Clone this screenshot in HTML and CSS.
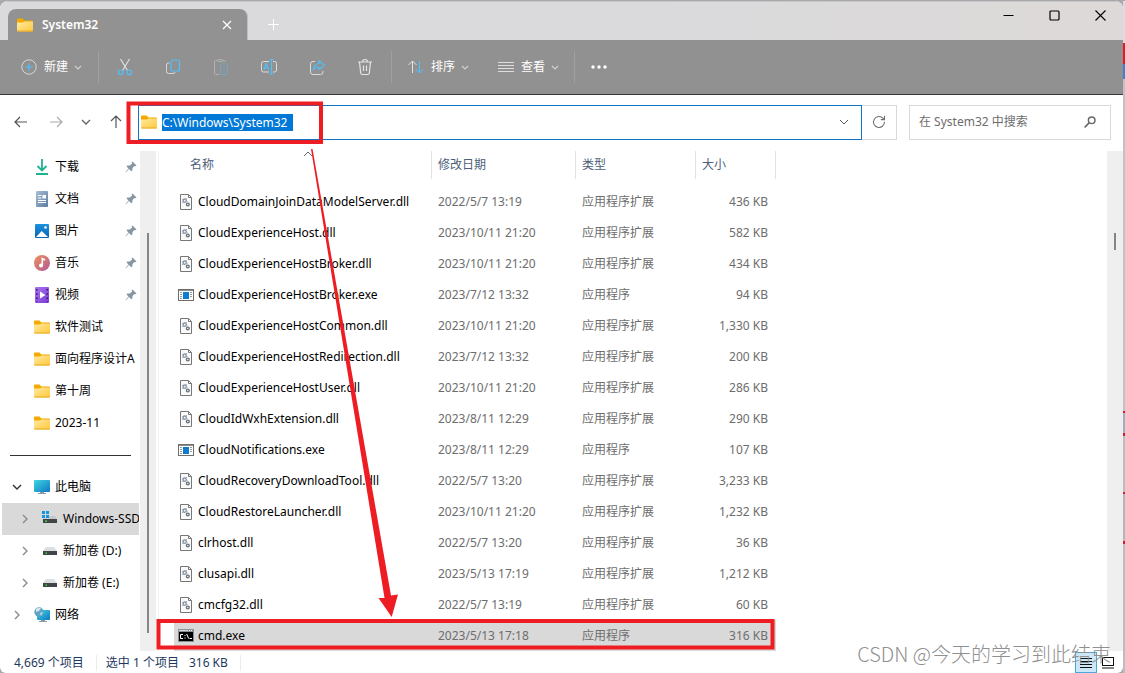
FILE: index.html
```
<!DOCTYPE html>
<html lang="zh-CN">
<head>
<meta charset="utf-8">
<title>System32</title>
<link rel="stylesheet" href="styles.css">
</head>
<body>
<svg class="defs" aria-hidden="true">
  <defs>
    <linearGradient id="gFolder" x1="0" y1="0" x2="1" y2="1"><stop offset="0" stop-color="#ffeaa3"/><stop offset="1" stop-color="#ffc83a"/></linearGradient>
    <linearGradient id="gDoc" x1="0" y1="0" x2="1" y2="1"><stop offset="0" stop-color="#a9bfd4"/><stop offset="1" stop-color="#5b7ca0"/></linearGradient>
    <linearGradient id="gPic" x1="0" y1="0" x2="0" y2="1"><stop offset="0" stop-color="#1a94e0"/><stop offset="1" stop-color="#0b62b4"/></linearGradient>
    <linearGradient id="gMus" x1="0" y1="0" x2="1" y2="1"><stop offset="0" stop-color="#f09055"/><stop offset="1" stop-color="#b05a9c"/></linearGradient>
    <linearGradient id="gVid" x1="0" y1="0" x2="1" y2="1"><stop offset="0" stop-color="#a974ee"/><stop offset="1" stop-color="#7a3bd6"/></linearGradient>
    <linearGradient id="gPc" x1="0" y1="0" x2="1" y2="1"><stop offset="0" stop-color="#3fd6df"/><stop offset="1" stop-color="#0f78c4"/></linearGradient>
  </defs>
  <symbol id="folder" viewBox="0 0 16 14"><path d="M0 1.500Q0 .5 1 .5H5.500L7.500 2.500H15Q16 2.500 16 3.500V7H0Z" fill="#f2a900"/><path d="M0 4.500H6L7.500 3.500H15.500Q16 3.500 16 4V12.500Q16 13.500 15 13.500H1Q0 13.500 0 12.500Z" fill="url(#gFolder)"/><path d="M0.300 13H15.700" stroke="#e8a820"/></symbol>
  <symbol id="pin" viewBox="0 0 12 12"><path d="M7.500 0.500L11.500 4.500L10.500 5.300L9.500 5L7.500 7L7.300 9.500L6.300 10.300L4 8L1 11L.5 11.300L.8 10.600L3.500 7.500L1.500 5.500L2.300 4.600L5 4.400L7 2.400L6.700 1.300Z" fill="#8796a3"/></symbol>
  <symbol id="dll" viewBox="0 0 12 16"><path d="M.5 .5H8.500L11.500 3.500V15.500H.5Z" fill="#fafafa" stroke="#777"/><path d="M8.500 .5V3.500H11.500" fill="none" stroke="#777"/><circle cx="4.700" cy="6.700" r="1.600" fill="none" stroke="#8c98a5" stroke-width="1.500"/><path d="M2 5H3V6H2ZM6 4H7V5H6ZM2 8H3V9H2ZM4 4H5V5H4ZM6.500 7H7.500V8H6.500Z" fill="#a8b2bd"/><circle cx="7.800" cy="10.500" r="1.400" fill="none" stroke="#66727f" stroke-width="1.400"/></symbol>
  <symbol id="exe" viewBox="0 0 16 12"><rect x=".5" y=".5" width="15" height="11" fill="#fff" stroke="#6e6e6e"/><path d="M1 1.500H15" stroke="#8d8d8d"/><rect x="5" y="3" width="6" height="7" fill="#0c7bd0"/><path d="M2 3.500H4M2 5.500H4M2 7.500H4M2 9.500H4M12 3.500H14M12 5.500H14M12 7.500H14" stroke="#9a9a9a"/></symbol>
  <symbol id="cmd" viewBox="0 0 16 13"><path d="M0 0H16V13H0Z" fill="#8b9095"/><path d="M1 1H10V2H1Z" fill="#d4d8dc"/><path d="M11 1H12V2H11ZM13 1H14V2H13Z" fill="#fff"/><path d="M1 3H15V12H1Z" fill="#000"/><path d="M5 5.500H2.500V9.500H5M7 6V7M7 8.500V9.500M8.700 5L10.700 9.500M11.500 9.500H14" fill="none" stroke="#fff"/></symbol>
  <symbol id="chev" viewBox="0 0 8 5"><path d="M1 1L4 4L7 1" fill="none" stroke="currentColor" stroke-width="1.200"/></symbol>
  <symbol id="right" viewBox="0 0 6 10"><path d="M1 1L5 5L1 9" fill="none" stroke="currentColor" stroke-width="1.400"/></symbol>
  <symbol id="drive" viewBox="0 0 14 8"><path d="M3 0H11L14 4H0Z" fill="#dcdfe2"/><path d="M0 4H14V8H0Z" fill="#404548"/><path d="M2.500 5.500H4V6.700H2.500Z" fill="#3cf04a"/></symbol>
</svg>
<div class="window">
  <header class="titlebar">
    <div class="tab">
      <svg class="i-folder"><use href="#folder"/></svg>
      <span class="tab-title">System32</span>
      <button class="tab-close" aria-label="关闭标签页"><svg width="10" height="10"><path d="M1 1L9 9M9 1L1 9" stroke="#fff" stroke-width="1.200"/></svg></button>
    </div>
    <button class="tab-add" aria-label="新标签页"><svg width="11" height="11"><path d="M5.500 0V11M0 5.500H11" stroke="#fff"/></svg></button>
    <div class="controls">
      <button aria-label="最小化"><svg width="11" height="11"><path d="M.5 5.500H10.500" stroke="#000"/></svg></button>
      <button aria-label="最大化"><svg width="11" height="11"><rect x="1" y="1" width="9" height="9" rx="1" fill="none" stroke="#000" stroke-width="1.200"/></svg></button>
      <button aria-label="关闭"><svg width="11" height="11"><path d="M.5 .5L10.500 10.500M10.500 .5L.5 10.500" stroke="#000" stroke-width="1.100"/></svg></button>
    </div>
  </header>

  <div class="toolbar">
    <button class="tool new"><svg width="16" height="16" fill="none"><circle cx="8" cy="8" r="7.200" stroke="#d6d6d6"/><path d="M8 4.500V11.500M4.500 8H11.500" stroke="#4cc2ff" stroke-width="1.200"/></svg><span>新建</span><svg class="i-chev"><use href="#chev"/></svg></button>
    <span class="sep"></span>
    <button class="icon" aria-label="剪切"><svg width="16" height="18" fill="none"><path d="M3.500 1L10.500 12.500M12.500 1L5.500 12.500" stroke="#e4e4e4" stroke-width="1.100"/><circle cx="3.700" cy="14.300" r="2.300" stroke="#4cc2ff" stroke-width="1.200"/><circle cx="12.300" cy="14.300" r="2.300" stroke="#4cc2ff" stroke-width="1.200"/></svg></button>
    <button class="icon" aria-label="复制"><svg width="16" height="16" fill="none"><path d="M4.500 4H3.500Q1.500 4 1.500 6V12.500Q1.500 14.500 3.500 14.500H8Q10 14.500 10.200 13" stroke="#d8d8d8"/><rect x="6" y="1" width="8.500" height="11" rx="2" stroke="#4cc2ff" stroke-width="1.200"/></svg></button>
    <button class="icon dim" aria-label="粘贴"><svg width="16" height="18" fill="none"><path d="M5 2.500H2.500Q1.500 2.500 1.500 3.500V15.500Q1.500 16.500 2.500 16.500H6M10 2.500H11.500Q12.500 2.500 12.500 4" stroke="#d4d4d4"/><rect x="4.500" y="1.500" width="5.500" height="2" rx="1" stroke="#d4d4d4"/><rect x="7.500" y="6" width="7" height="10.500" rx="1" stroke="#4cc2ff"/></svg></button>
    <button class="icon" aria-label="重命名"><svg width="18" height="18" fill="none"><path d="M9 3.500H3.500Q1.500 3.500 1.500 5.500V12Q1.500 14 3.500 14H9M13 3.500H14.500Q16.500 3.500 16.500 5.500V12Q16.500 14 14.500 14H13" stroke="#dcdcdc"/><path d="M11.500 1.500V16M9.500 1.500H13.500M9.500 16H13.500M3.800 12L6.300 5.500L8.800 12M4.700 10H7.900" stroke="#4cc2ff" stroke-width="1.200"/></svg></button>
    <button class="icon" aria-label="共享"><svg width="17" height="17" fill="none"><path d="M6 2.500H4Q1.500 2.500 1.500 5V13Q1.500 15.500 4 15.500H11.500Q14 15.500 14 13V12" stroke="#dcdcdc"/><path d="M10 2L15.500 6.300L10 10.500V8.300Q6.500 8 4.500 10.500Q5 5.200 10 4.500Z" stroke="#4cc2ff" stroke-width="1.100"/></svg></button>
    <button class="icon" aria-label="删除"><svg width="16" height="18" fill="none"><path d="M1 4H15M5.500 4Q5.500 1.500 8 1.500Q10.500 1.500 10.500 4M2.500 4L3.700 15Q3.900 16.500 5.300 16.500H10.700Q12.100 16.500 12.300 15L13.500 4M6.500 7.500V13M9.500 7.500V13" stroke="#e4e4e4" stroke-width="1.200"/></svg></button>
    <span class="sep"></span>
    <button class="tool"><svg width="16" height="14" fill="none"><path d="M4.500 13V1M.5 5L4.500 1L8.500 5" stroke="#e2e2e2"/><path d="M11.500 1V13M7.500 9L11.500 13L15.500 9" stroke="#4cc2ff"/></svg><span>排序</span><svg class="i-chev"><use href="#chev"/></svg></button>
    <button class="tool"><svg width="16" height="12" fill="none"><path d="M0 1.500H16M0 4.500H16M0 7.500H16M0 10.500H16" stroke="#dedede"/></svg><span>查看</span><svg class="i-chev"><use href="#chev"/></svg></button>
    <span class="sep last"></span>
    <button class="icon" aria-label="更多"><svg width="18" height="4" fill="#fff"><circle cx="3" cy="2" r="1.700"/><circle cx="9" cy="2" r="1.700"/><circle cx="15" cy="2" r="1.700"/></svg></button>
  </div>

  <div class="navbar">
    <button class="back" aria-label="后退"><svg width="14" height="12" fill="none" stroke="#555"><path d="M1 6H13M6 1L1 6L6 11" stroke-width="1.200"/></svg></button>
    <button class="fwd" aria-label="前进"><svg width="14" height="12" fill="none" stroke="#aaa"><path d="M1 6H13M8 1L13 6L8 11" stroke-width="1.200"/></svg></button>
    <button class="recent" aria-label="最近的位置"><svg width="10" height="6" fill="none" stroke="#666"><path d="M1 1L5 5L9 1" stroke-width="1.400"/></svg></button>
    <button class="up" aria-label="向上"><svg width="12" height="14" fill="none" stroke="#555"><path d="M6 13V1M1 6L6 1L11 6" stroke-width="1.200"/></svg></button>
    <div class="address">
      <svg class="i-folder"><use href="#folder"/></svg>
      <input class="path" aria-label="地址" value="C:\Windows\System32">
      <button class="drop" aria-label="以前的位置"><svg width="10" height="6" fill="none" stroke="#555"><path d="M1 1L5 5L9 1"/></svg></button>
    </div>
    <button class="refresh" aria-label="刷新"><svg width="14" height="14" fill="none" stroke="#707070"><path d="M12.500 6.800A5.500 5.500 0 1 1 11 3.200L12.300 4.500M12.500 .8V4.600H8.800" stroke-width="1.100"/></svg></button>
    <div class="search">
      <input type="search" aria-label="搜索" placeholder="在 System32 中搜索">
      <svg width="12" height="12" fill="none" stroke="#6a6a6a"><circle cx="7.700" cy="4.300" r="3.300" stroke-width="1.500"/><path d="M5.300 6.700L.7 11.300" stroke-width="1.700"/></svg>
    </div>
  </div>

  <div class="body">
    <nav class="side">
      <a href="#" class="item"><svg width="16" height="16" fill="none"><path d="M8 0V11M3.500 7L8 11.500L12.500 7M2 15H14" stroke="#1fb391" stroke-width="1.800"/></svg><span>下载</span><svg class="i-pin"><use href="#pin"/></svg></a>
      <a href="#" class="item"><svg width="16" height="16"><rect x="2" width="12" height="16" rx="1" fill="url(#gDoc)"/><path d="M4 4.500H7.500M4 7H7.500M4 9.500H12M4 11.500H12" stroke="#fff"/><rect x="8.500" y="4" width="3.500" height="3.500" fill="#fff"/></svg><span>文档</span><svg class="i-pin"><use href="#pin"/></svg></a>
      <a href="#" class="item"><svg width="16" height="16"><rect x="1" y="1" width="14" height="14" rx="1" fill="url(#gPic)"/><path d="M2 14L7.700 8L14 14Z" fill="#fff"/><circle cx="11.500" cy="4.500" r="1.300" fill="#fff"/></svg><span>图片</span><svg class="i-pin"><use href="#pin"/></svg></a>
      <a href="#" class="item"><svg width="16" height="16"><circle cx="8" cy="8" r="8" fill="url(#gMus)"/><circle cx="7" cy="10.500" r="2" fill="#fff"/><path d="M8.300 10.500V3.500L11 5" fill="none" stroke="#fff" stroke-width="1.600"/></svg><span>音乐</span><svg class="i-pin"><use href="#pin"/></svg></a>
      <a href="#" class="item"><svg width="16" height="16"><rect x="1" y="0" width="14" height="16" rx="1" fill="url(#gVid)"/><path d="M2.800 2V15M13.200 2V15" stroke="#3b1479" stroke-width="1.600" stroke-dasharray="1.600 2.600"/><path d="M6 4.500L11.500 8L6 11.500Z" fill="#fff"/></svg><span>视频</span><svg class="i-pin"><use href="#pin"/></svg></a>
      <a href="#" class="item"><svg class="i-folder"><use href="#folder"/></svg><span>软件测试</span></a>
      <a href="#" class="item"><svg class="i-folder"><use href="#folder"/></svg><span>面向程序设计A</span></a>
      <a href="#" class="item"><svg class="i-folder"><use href="#folder"/></svg><span>第十周</span></a>
      <a href="#" class="item"><svg class="i-folder"><use href="#folder"/></svg><span>2023-11</span></a>
      <hr>
      <a href="#" class="item tree open"><svg width="10" height="6" fill="none" stroke="#333"><path d="M1 1L5 5L9 1" stroke-width="1.400"/></svg><svg width="16" height="16"><rect y="1" width="16" height="12" rx="1" fill="url(#gPc)"/><path d="M6 13H10V14H12V15H4V14H6Z" fill="#8c9aa5"/></svg><span>此电脑</span></a>
      <a href="#" class="item tree sub selected"><svg class="i-right"><use href="#right"/></svg><svg width="16" height="16"><path d="M0 0H3V3H0ZM4 0H7V3H4ZM0 4H3V7H0ZM4 4H7V7H4Z" fill="#1695e0"/><path d="M7 5H13L15 8H1L3 7.500H7Z" fill="#c4c8cb"/><path d="M1 8H15V12H1Z" fill="#404548"/><path d="M3 9.500H5V10.700H3Z" fill="#3cf04a"/></svg><span>Windows-SSD</span></a>
      <a href="#" class="item tree sub"><svg class="i-right"><use href="#right"/></svg><svg class="i-drive"><use href="#drive"/></svg><span>新加卷 (D:)</span></a>
      <a href="#" class="item tree sub"><svg class="i-right"><use href="#right"/></svg><svg class="i-drive"><use href="#drive"/></svg><span>新加卷 (E:)</span></a>
      <a href="#" class="item tree"><svg class="i-right"><use href="#right"/></svg><svg width="16" height="16"><rect x="3" y="3" width="13" height="10" rx="1" fill="url(#gPc)"/><path d="M7 13H11V14H13V15H5V14H7Z" fill="#8c9aa5"/><circle cx="5" cy="5" r="4.700" fill="#5fa3c7"/><path d="M2 2Q5 0 7 1.500L5 4L2 5Z" fill="#d3e6ee"/><path d="M6 6L9 5L7 9Z" fill="#c0dbe6"/></svg><span>网络</span></a>
    </nav>
    <div class="scroll side-scroll"><i></i></div>
    <main class="files">
      <table>
        <colgroup><col class="c-name"><col class="c-date"><col class="c-type"><col class="c-size"></colgroup>
        <thead><tr><th class="name"><div>名称<svg class="sort" width="10" height="6" fill="none" stroke="#666"><path d="M1 5L5 1L9 5"/></svg></div></th><th><div>修改日期</div></th><th><div>类型</div></th><th><div>大小</div></th></tr></thead>
        <tbody>
          <tr><td><div><svg class="i-dll"><use href="#dll"/></svg>CloudDomainJoinDataModelServer.dll</div></td><td>2022/5/7 13:19</td><td>应用程序扩展</td><td>436 KB</td></tr>
          <tr><td><div><svg class="i-dll"><use href="#dll"/></svg>CloudExperienceHost.dll</div></td><td>2023/10/11 21:20</td><td>应用程序扩展</td><td>582 KB</td></tr>
          <tr><td><div><svg class="i-dll"><use href="#dll"/></svg>CloudExperienceHostBroker.dll</div></td><td>2023/10/11 21:20</td><td>应用程序扩展</td><td>434 KB</td></tr>
          <tr><td><div><svg class="i-exe"><use href="#exe"/></svg>CloudExperienceHostBroker.exe</div></td><td>2023/7/12 13:32</td><td>应用程序</td><td>94 KB</td></tr>
          <tr><td><div><svg class="i-dll"><use href="#dll"/></svg>CloudExperienceHostCommon.dll</div></td><td>2023/10/11 21:20</td><td>应用程序扩展</td><td>1,330 KB</td></tr>
          <tr><td><div><svg class="i-dll"><use href="#dll"/></svg>CloudExperienceHostRedirection.dll</div></td><td>2023/7/12 13:32</td><td>应用程序扩展</td><td>200 KB</td></tr>
          <tr><td><div><svg class="i-dll"><use href="#dll"/></svg>CloudExperienceHostUser.dll</div></td><td>2023/10/11 21:20</td><td>应用程序扩展</td><td>286 KB</td></tr>
          <tr><td><div><svg class="i-dll"><use href="#dll"/></svg>CloudIdWxhExtension.dll</div></td><td>2023/8/11 12:29</td><td>应用程序扩展</td><td>290 KB</td></tr>
          <tr><td><div><svg class="i-exe"><use href="#exe"/></svg>CloudNotifications.exe</div></td><td>2023/8/11 12:29</td><td>应用程序</td><td>107 KB</td></tr>
          <tr><td><div><svg class="i-dll"><use href="#dll"/></svg>CloudRecoveryDownloadTool.dll</div></td><td>2022/5/7 13:20</td><td>应用程序扩展</td><td>3,233 KB</td></tr>
          <tr><td><div><svg class="i-dll"><use href="#dll"/></svg>CloudRestoreLauncher.dll</div></td><td>2023/10/11 21:20</td><td>应用程序扩展</td><td>1,232 KB</td></tr>
          <tr><td><div><svg class="i-dll"><use href="#dll"/></svg>clrhost.dll</div></td><td>2022/5/7 13:20</td><td>应用程序扩展</td><td>36 KB</td></tr>
          <tr><td><div><svg class="i-dll"><use href="#dll"/></svg>clusapi.dll</div></td><td>2023/5/13 17:19</td><td>应用程序扩展</td><td>1,212 KB</td></tr>
          <tr><td><div><svg class="i-dll"><use href="#dll"/></svg>cmcfg32.dll</div></td><td>2022/5/7 13:19</td><td>应用程序扩展</td><td>60 KB</td></tr>
          <tr class="selected"><td><div><svg class="i-cmd"><use href="#cmd"/></svg>cmd.exe</div></td><td>2023/5/13 17:18</td><td>应用程序</td><td>316 KB</td></tr>
        </tbody>
      </table>
    </main>
    <div class="scroll file-scroll"><i></i></div>
  </div>

  <footer class="status">
    <span class="count">4,669 个项目</span>
    <span class="picked">选中 1 个项目</span>
    <span class="size">316 KB</span>
    <div class="views">
      <button class="view on" aria-label="详细信息"><svg width="12" height="13"><path d="M0 2.500H12M0 5.500H12M0 8.500H12M0 11.500H12" stroke="#111"/></svg></button>
      <button class="view" aria-label="大图标"><svg width="12" height="13" fill="none"><rect x=".5" y="1.500" width="11" height="8" stroke="#111"/><path d="M0 12H12" stroke="#111"/></svg></button>
    </div>
  </footer>
</div>
<div class="backdrop"></div>

<svg class="marks" width="800" height="673" fill="none" stroke="#ee1d23">
  <rect x="128.500" y="103.500" width="192.500" height="38.500" stroke-width="4"/>
  <rect x="158.500" y="621" width="614" height="26.500" stroke-width="4"/>
  <path d="M311 149L312.500 149L391 595.500L398 594.500L391.700 617L378.500 598L384.500 598Z" fill="#ee1d23" stroke="none"/>
</svg>
<div class="watermark">CSDN @今天的学习到此结束</div>
</body>
</html>
```
FILE: styles.css
```
* { box-sizing: border-box; }
body {
  margin: 0;
  height: 100vh;
  padding-top: 1px;
  display: flex;
  overflow: hidden;
  position: relative;
  background: #a9a8aa;
  font: 12px/16px "Noto Sans", "Noto Sans CJK SC", sans-serif;
  color: #000;
}
button { border: 0; padding: 0; background: none; font: inherit; color: inherit; display: flex; align-items: center; justify-content: center; }
input { font: inherit; border: 0; padding: 0; outline: 0; background: none; min-width: 0; }
a { color: inherit; text-decoration: none; }
svg { flex: none; display: block; }
.defs { position: absolute; width: 0; height: 0; }
.i-folder { width: 16px; height: 14px; }
.i-pin { width: 12px; height: 12px; }
.i-chev { width: 8px; height: 5px; color: #d0d0d0; }
.i-right { width: 6px; height: 10px; color: #8a8a8a; }
.i-drive { width: 14px; height: 8px; margin: 0 1px; }

.window {
  flex: 1;
  min-width: 0;
  display: flex;
  flex-direction: column;
  background: #fff;
  border-radius: 8px 8px 6px 6px;
  overflow: hidden;
}
.backdrop {
  width: 2px;
  background: linear-gradient(#dcdcdc 0 42px, #e01b22 42px 63px, #3c82cf 63px 78px, #c2c2c2 78px 410px, #d3202a 410px 412px, #9eb0c0 412px 432px, #d3202a 432px 435px, #bdbdbd 435px 491px, #d3202a 491px 493px, #b5b5b5 493px 540px, #d3202a 540px 543px, #bdbdbd 543px);
}

.titlebar {
  height: 39px;
  padding: 7px 0 0 8px;
  display: flex;
  background: linear-gradient(90deg, #dadadc 60%, #ddd9d8);
  border-top: 1px solid #c6c6c8;
}
.tab {
  width: 240px;
  padding: 0 10px 0 9px;
  display: flex;
  align-items: center;
  background: #929292;
  border-radius: 8px 8px 0 0;
  border-right: 1px solid #bebebe;
  color: #fff;
}
.tab-title { flex: 1; margin-left: 9px; font-weight: 600; }
.tab-close { width: 20px; height: 20px; }
.tab-add { width: 50px; }
.controls { margin: -9px 0 0 auto; display: flex; height: 30px; }
.controls button { width: 46px; }

.toolbar {
  height: 55px;
  padding-left: 12px;
  display: flex;
  align-items: center;
  background: #929191;
  border-bottom: 1px solid #3a363a;
  color: #fff;
}
.sep { width: 1px; height: 32px; margin: 0 2px 0 0; background: #a0a0a0; }
.icon + .sep { margin: 0 2px; }
.sep.last { margin: 0; }
.icon { width: 48px; height: 40px; }
.dim { opacity: 0.5; }
.tool { width: 90px; height: 40px; padding-left: 14px; gap: 6px; justify-content: flex-start; }
.tool.new { width: 86px; padding-left: 9px; }
.tool span { margin-left: 1px; }

.navbar { height: 56px; padding: 0 12px 2px 4px; display: flex; align-items: center; }
.navbar > button { height: 35px; }
.back { width: 34px; }
.fwd { width: 36px; }
.recent { width: 24px; }
.up { width: 35px; margin-right: 5px; }
.address { flex: 1; min-width: 0; height: 35px; padding: 0 3px 0 2px; display: flex; align-items: center; border: 1px solid #1274c4; }
.path { width: 131px; height: 17px; margin-left: 5px; background: #0078d7; color: #fff; }
.drop { width: 28px; height: 28px; margin-left: auto; }
.navbar > .refresh { width: 35px; border: 1px solid #d9d9d9; border-left: 0; }
.search { width: 202px; height: 35px; margin-left: 12px; padding: 0 14px 0 9px; display: flex; align-items: center; border: 1px solid #d9d9d9; }
.search input { flex: 1; color: #6d6d6d; }
.search input::placeholder { color: #6d6d6d; }

.body { flex: 1; min-height: 0; display: flex; }
.side { width: 140px; overflow: hidden; }
.item { height: 32px; padding: 0 3px 0 34px; display: flex; align-items: center; white-space: nowrap; }
.item span { margin-left: 5px; }
.i-pin { margin-left: auto; }
.side hr { height: 1px; margin: 16px 9px 15px 10px; border: 0; background: #333; }
.item.tree { padding-left: 14px; }
.item.tree svg:first-child { margin-right: 14px; }
.item.tree.open { padding-left: 12px; }
.item.tree.open svg:first-child { margin-right: 12px; }
.item.tree.sub { padding-left: 22px; }
.item.tree.sub.selected { margin: 0 1px 0 2px; padding-left: 20px; padding-right: 0; background: #d9d9d9; overflow: hidden; }
.scroll { width: 16px; padding-top: 82px; background: #efefef; display: flex; justify-content: center; }
.scroll i { width: 2px; background: #858585; }
.side-scroll i { height: 400px; }
.file-scroll i { height: 17px; }

.files { flex: 1; min-width: 0; margin-left: 2px; padding-left: 15px; border-left: 1px solid #f3f3f3; overflow: hidden; }
table { width: 602px; table-layout: fixed; border-collapse: collapse; }
.c-name { width: 258px; }
.c-date { width: 144px; }
.c-type { width: 120px; }
.c-size { width: 80px; }
th { height: 35px; padding: 0; vertical-align: top; text-align: left; font-weight: 400; color: #4c607a; }
th div { position: relative; height: 28px; padding: 6px; border-right: 1px solid #e3e3e3; }
th.name div { padding-left: 16px; }
.sort { position: absolute; left: 129px; top: 0; }
td { height: 31px; padding: 0 6px; color: #6d6d6d; white-space: nowrap; }
td:first-child { padding: 0 0 0 4px; color: #000; }
td:last-child { padding-right: 8px; text-align: right; }
td div { display: flex; align-items: center; }
.i-dll { width: 12px; height: 16px; margin: 0 6px 0 2px; }
.i-exe { width: 16px; height: 12px; margin-right: 4px; }
.i-cmd { width: 16px; height: 13px; margin-right: 4px; }
tr.selected { background: #d9d9d9; }

.status { height: 22px; padding: 1px 0 0 14px; display: flex; align-items: center; color: #1e395b; white-space: nowrap; }
.count { padding-right: 12px; border-right: 1px solid #ececec; }
.picked { margin-left: 9px; }
.size { margin-left: 10px; padding-right: 12px; border-right: 1px solid #ececec; }
.views { margin: 0 4px 0 auto; display: flex; align-self: stretch; }
.view { width: 22px; }
.view.on { background: #cce8f8; border: 1px solid #4aa8dc; }

.marks { position: absolute; left: 0; top: 0; pointer-events: none; }
.watermark {
  position: absolute;
  right: 14px;
  bottom: 6px;
  font: 300 20px/26px "Noto Sans CJK SC", sans-serif;
  color: #909090;
  white-space: nowrap;
}
```
